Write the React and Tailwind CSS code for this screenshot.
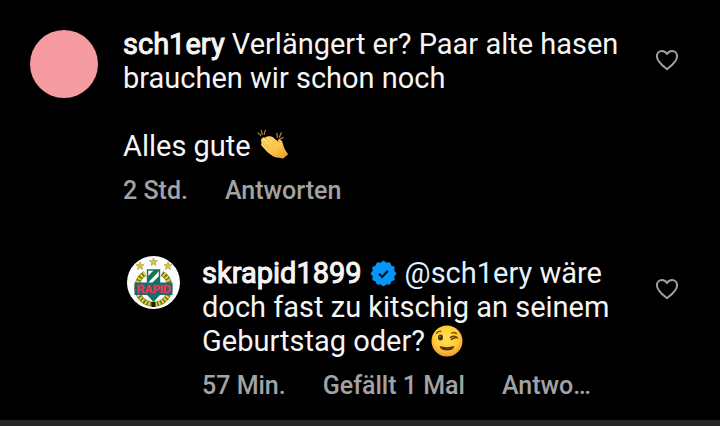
function HeartButton({ label }) {
  return (
    <button type="button" aria-label={label} className="shrink-0 p-2 text-[#a0a0a0]">
      <svg className="h-6 w-6" viewBox="0 0 24 24" fill="none" stroke="currentColor" strokeWidth="2" strokeLinejoin="round">
        <path d="M12 21.2C9.6 19.3 1.9 14 1.9 8.3C1.9 5.2 4.2 2.9 7 2.9C9.2 2.9 11 4.1 12 6C13 4.1 14.8 2.9 17 2.9C19.8 2.9 22.1 5.2 22.1 8.3C22.1 14 14.4 19.3 12 21.2Z" />
      </svg>
    </button>
  );
}

// twelve-pointed seal, outer and inner points alternate
const SEAL = Array.from({ length: 24 }, (_, i) => {
  const r = i % 2 ? 15.5 : 18;
  const a = (i * Math.PI) / 12 - Math.PI / 2;
  return `${(20 + r * Math.cos(a)).toFixed(2)},${(20 + r * Math.sin(a)).toFixed(2)}`;
}).join(" ");

function VerifiedBadge() {
  return (
    <svg role="img" aria-label="Verifiziert" className="mx-2 inline-block h-[27px] w-[27px] align-[-4px]" viewBox="0 0 40 40">
      <polygon points={SEAL} fill="#0795f6" stroke="#0795f6" strokeWidth="2" strokeLinejoin="round" />
      <path d="M13.500 20.500l4.500 4.500 8.500-9" fill="none" stroke="#00121f" strokeWidth="3.200" />
    </svg>
  );
}

function ClapEmoji() {
  return (
    <svg role="img" aria-label="Klatschende Hände" className="ml-[6px] inline-block h-8 w-8 align-[-5px]" viewBox="0 0 33 32">
      <defs>
        <linearGradient id="clap-skin" x1="0" y1="0" x2="1" y2="1">
          <stop offset="0" stopColor="#ffe27c" />
          <stop offset="0.600" stopColor="#fac245" />
          <stop offset="1" stopColor="#e7952b" />
        </linearGradient>
      </defs>
      <g stroke="#b47a42" strokeWidth="1.300" strokeLinecap="round">
        <path d="M1 3.500L4 6M4.500 1L5.500 5M8.500 1L7.500 5M20.500 4L21 8M25 3.500L23 8M27 8.500L24 9.500" />
      </g>
      <path
        fill="#f0ad3d"
        d="M11 7.500C13 5.800 15 7 17 9L22 12.500L21.600 11.500C21.500 9.500 24 9.200 24.800 11.200L27.500 18C28.200 20.500 31 23.500 32 25.500L27 30L12 24Z"
      />
      <path
        fill="url(#clap-skin)"
        d="M4.500 10C5.300 8.300 7 7.600 8.500 8.700C9.500 6.900 11.500 6.700 13 8.100C14.500 7 16 7.400 17.200 8.800L23 14.500L23 12.500C23.200 10.800 25.200 10.600 26 12.300L28 19.500C28.700 22 30.500 23.500 31.500 25L26.500 30C24 28.500 21 29.500 17.500 28C14 26.500 11.500 24.200 9 21.500L5 17C3.900 15.700 4 14.500 5 13.700C4 12.500 3.900 11.200 4.500 10Z"
      />
      <path fill="none" stroke="#e0983a" strokeWidth="0.600" strokeLinecap="round" d="M8.500 8.900L16 16.500M5.200 13.800L12 20.500M5 10.500L13.500 19M13 8.300L19 14.500" />
    </svg>
  );
}

function WinkEmoji() {
  return (
    <svg role="img" aria-label="Zwinkerndes Gesicht" className="ml-[6px] inline-block h-8 w-8 align-[-6px]" viewBox="0 0 32 32">
      <defs>
        <radialGradient id="wink-face" cx="0.480" cy="0.400" r="0.600">
          <stop offset="0" stopColor="#ffe34f" />
          <stop offset="0.650" stopColor="#fdcb35" />
          <stop offset="1" stopColor="#f19a2d" />
        </radialGradient>
      </defs>
      <circle cx="16" cy="16" r="15.500" fill="url(#wink-face)" />
      <ellipse cx="9.500" cy="12.500" rx="2.500" ry="3" fill="#4b2f0c" />
      <circle cx="8.900" cy="11.500" r="0.700" fill="#a47b3a" />
      <g fill="none" stroke="#6b3f0b" strokeLinecap="round" strokeLinejoin="round">
        <path strokeWidth="1.200" d="M5.500 8.300Q7 6 10 6.300M20.500 8Q23.500 6.800 25.500 8.700" />
        <path strokeWidth="1.600" d="M19.500 12.500Q23.500 9.700 26.500 13M20.500 14.300L25 12.300" />
      </g>
      <path fill="#5d300b" d="M8.500 21Q16 23.300 23.500 21Q22.500 25.500 16 25.500Q9.500 25.500 8.500 21Z" />
    </svg>
  );
}

const STAR = "M0 -4.200L1.100 -1.300L4 -1.300L1.700 0.600L2.500 3.500L0 1.800L-2.500 3.500L-1.700 0.600L-4 -1.300L-1.100 -1.300Z";

function RapidCrest() {
  return (
    <svg role="img" aria-label="SK Rapid" className="h-[53px] w-[53px] shrink-0" viewBox="0 0 53 53">
      <circle cx="26.500" cy="26.500" r="26.500" fill="#fdfdfd" />
      <g fill="#e7c52b" stroke="#8d8420" strokeWidth="0.500">
        <path d={STAR} transform="translate(13 10)" />
        <path d={STAR} transform="translate(26.500 6)" />
        <path d={STAR} transform="translate(41 10)" />
      </g>
      <g fill="none">
        <path stroke="#71741f" strokeWidth="5" d="M18 17.500A16.500 16.500 0 1 0 35 17.500" />
        <path stroke="#e6d92f" strokeWidth="4" strokeDasharray="1.800 1.600" d="M18 17.500A16.500 16.500 0 1 0 35 17.500" />
      </g>
      <path fill="#fff" stroke="#16735b" strokeWidth="1.400" d="M20.500 14H32.500V38L26.500 45L20.500 38Z" />
      <path fill="#16735b" d="M20 21L27 14H33L20 28ZM24 28L33 19V27L32 28ZM20 39H33L26.500 45Z" />
      <rect x="7.500" y="26.500" width="38" height="12.500" fill="#176a70" />
      <text
        x="26.700"
        y="37"
        textAnchor="middle"
        className="font-['Liberation_Sans',sans-serif] text-[11px] font-bold"
        fill="#ee3550"
        stroke="#ee3550"
        strokeWidth="0.400"
      >
        RAPID
      </text>
      <rect x="24.500" y="46" width="4" height="5" fill="#1c1c14" />
    </svg>
  );
}

function Username({ name }) {
  return (
    <a href={`#${name}`} className="[-webkit-text-stroke:1px_#f5f5f5]">{name}</a>
  );
}

function Meta({ time, likes }) {
  return (
    <div className="mr-[51px] flex gap-[37px] pt-3 text-[25px] leading-8 font-medium whitespace-nowrap text-[#a3a3a3]">
      <span>{time}</span>
      {likes && <button type="button">{likes}</button>}
      <button type="button" className="min-w-0 truncate">Antworten</button>
    </div>
  );
}

export default function App() {
  return (
    <main className="min-h-screen bg-black font-['Roboto',sans-serif] text-[29px] leading-[34px] text-[#f5f5f5]">
      <article className="flex items-start pt-[27px] pr-[33px] pl-[30px]">
        <div className="mt-[3px] mr-[25px] h-[68px] w-[68px] shrink-0 rounded-full bg-[#f59ba1]" />
        <div className="min-w-0 flex-1">
          <p>
            <Username name="sch1ery" /> Verlängert er? Paar alte hasen brauchen wir schon noch
          </p>
          <p className="mt-[34px]">
            Alles gute
            <ClapEmoji />
          </p>
          <Meta time="2 Std." />
        </div>
        <div className="mt-[13px]">
          <HeartButton label="Kommentar von sch1ery liken" />
        </div>
      </article>

      <article className="flex items-start pt-[49px] pr-[33px] pb-[18px] pl-[127px]">
        <RapidCrest />
        <div className="ml-[22px] min-w-0 flex-1">
          <p>
            <Username name="skrapid1899" />
            <VerifiedBadge />
            <a href="#sch1ery" className="text-[#e0f1ff]">@sch1ery</a> wäre doch fast zu kitschig an seinem Geburtstag oder?
            <WinkEmoji />
          </p>
          <Meta time="57 Min." likes="Gefällt 1 Mal" />
        </div>
        <div className="mt-[13px]">
          <HeartButton label="Kommentar von skrapid1899 liken" />
        </div>
      </article>
      <div className="h-[6px] bg-[#262626]" />
    </main>
  );
}
